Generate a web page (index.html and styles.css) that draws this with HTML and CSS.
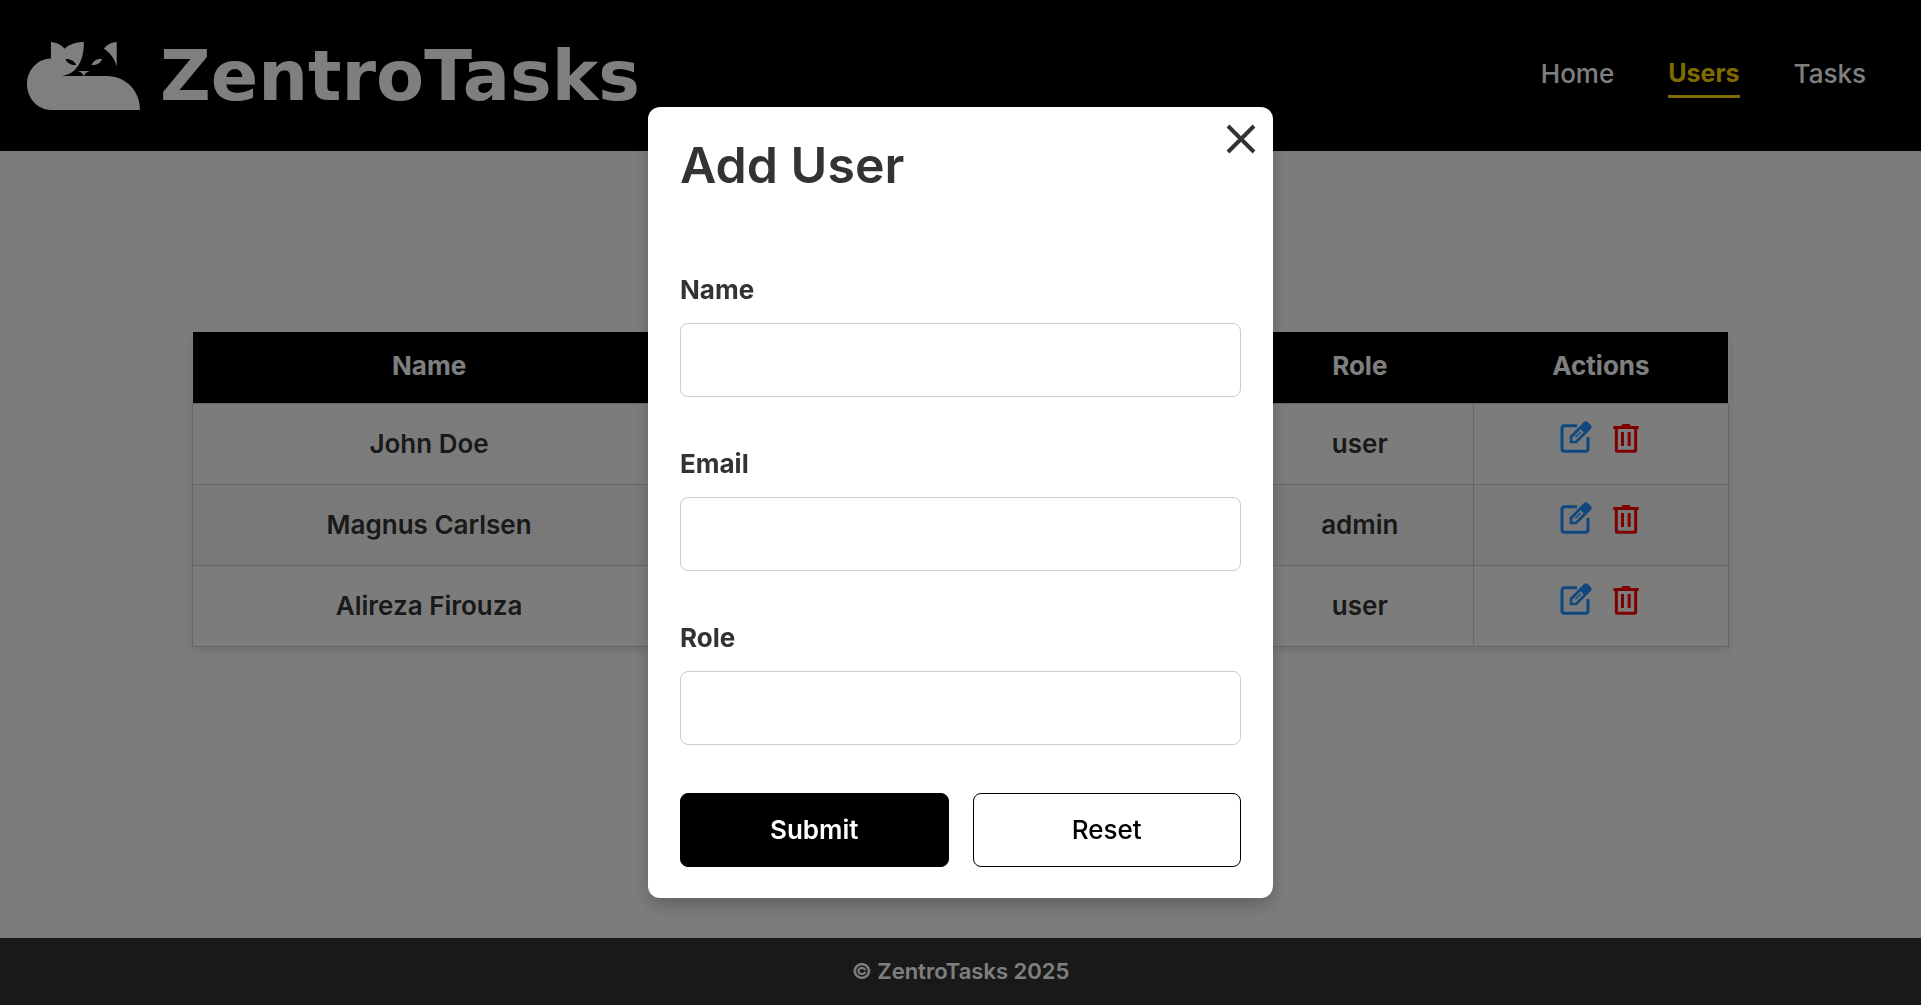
FILE: index.html
```html
<!DOCTYPE html>
<html lang="en">
<head>
  <meta charset="utf-8">
  <meta name="viewport" content="width=device-width, initial-scale=1">
  <title>ZentroTasks - Users</title>
  <link rel="stylesheet" href="styles.css">
</head>
<body>
  <svg class="sprite" aria-hidden="true">
    <symbol id="icon-edit" viewBox="0 0 96 96">
      <path d="M51 14H13Q6 14 6 21V84Q6 91 13 91H77Q84 91 84 84V48" fill="none" stroke="currentColor" stroke-width="9"/>
      <path fill="currentColor" fill-rule="evenodd" d="M29 67V46L71 4Q77-2 84 4L92 12Q98 18 92 25L50 67ZM37 59H46L71 34L62 25L37 50Z"/>
      <path d="M46 49L62 33" stroke="currentColor" stroke-width="4"/>
    </symbol>
    <symbol id="icon-trash" viewBox="0 0 96 96">
      <path fill="currentColor" d="M10 15H34Q34 9 40 9H56Q62 9 62 15H86V24H10ZM33 33H42V75H33ZM53 33H62V75H53Z"/>
      <path d="M19 22V86Q19 91 24 91H72Q77 91 77 86V22" fill="none" stroke="currentColor" stroke-width="9"/>
    </symbol>
  </svg>

  <header class="header">
    <a class="brand" href="#">
      <svg class="brand-mark" viewBox="80 66 340 204" aria-hidden="true">
        <path fill="#fff" d="M152 66C169 67 183 75 193 86C208 73 226 66 251 66C252 122 229 163 184 168H320C377 168 420 212 420 270H152C112 270 80 235 80 192C80 150 112 115 152 115Z"/>
        <path fill="#000" d="M196 117C207 115 223 122 228 135C213 136 201 130 196 117Z"/>
        <path fill="#fff" d="M274 135C279 121 292 115 306 117C301 130 289 136 274 135Z"/>
        <path fill="#fff" d="M234 153H268C259 156 254 161 251 169C248 161 243 156 234 153Z"/>
        <path fill="#fff" d="M311 85C322 73 335 67 350 66V139C344 116 331 99 311 85Z"/>
      </svg>
      <span class="brand-name">ZentroTasks</span>
    </a>
    <nav class="nav">
      <a class="nav-link" href="#">Home</a>
      <a class="nav-link nav-link-active" href="#" aria-current="page">Users</a>
      <a class="nav-link" href="#">Tasks</a>
    </nav>
  </header>

  <main class="main">
    <table class="users">
      <colgroup>
        <col class="col-name"><col class="col-email"><col class="col-role"><col class="col-actions">
      </colgroup>
      <thead>
        <tr><th>Name</th><th>Email</th><th>Role</th><th>Actions</th></tr>
      </thead>
      <tbody>
        <tr>
          <td>John Doe</td><td>john@example.com</td><td>user</td>
          <td class="actions-cell"><div class="actions">
            <button class="icon-button edit" type="button" aria-label="Edit John Doe"><svg class="icon"><use href="#icon-edit"/></svg></button>
            <button class="icon-button delete" type="button" aria-label="Delete John Doe"><svg class="icon"><use href="#icon-trash"/></svg></button>
          </div></td>
        </tr>
        <tr>
          <td>Magnus Carlsen</td><td>magnus@example.com</td><td>admin</td>
          <td class="actions-cell"><div class="actions">
            <button class="icon-button edit" type="button" aria-label="Edit Magnus Carlsen"><svg class="icon"><use href="#icon-edit"/></svg></button>
            <button class="icon-button delete" type="button" aria-label="Delete Magnus Carlsen"><svg class="icon"><use href="#icon-trash"/></svg></button>
          </div></td>
        </tr>
        <tr>
          <td>Alireza Firouza</td><td>alireza@example.com</td><td>user</td>
          <td class="actions-cell"><div class="actions">
            <button class="icon-button edit" type="button" aria-label="Edit Alireza Firouza"><svg class="icon"><use href="#icon-edit"/></svg></button>
            <button class="icon-button delete" type="button" aria-label="Delete Alireza Firouza"><svg class="icon"><use href="#icon-trash"/></svg></button>
          </div></td>
        </tr>
      </tbody>
    </table>
    <button class="button button-primary add-user" type="button">Add User</button>
  </main>

  <footer class="footer">© ZentroTasks 2025</footer>

  <div class="overlay">
    <section class="modal" role="dialog" aria-modal="true" aria-labelledby="modal-title">
      <button class="close" type="button" aria-label="Close">
        <svg class="close-icon" viewBox="0 0 30 30"><path d="M2 2L28 28M28 2L2 28" stroke="currentColor" stroke-width="4"/></svg>
      </button>
      <h2 class="modal-title" id="modal-title">Add User</h2>
      <form class="form">
        <div class="field">
          <label class="label" for="name">Name</label>
          <input class="input" id="name" type="text">
        </div>
        <div class="field">
          <label class="label" for="email">Email</label>
          <input class="input" id="email" type="email">
        </div>
        <div class="field">
          <label class="label" for="role">Role</label>
          <input class="input" id="role" type="text">
        </div>
        <div class="form-buttons">
          <button class="button button-primary" type="submit">Submit</button>
          <button class="button button-outline" type="reset">Reset</button>
        </div>
      </form>
    </section>
  </div>
</body>
</html>
```
FILE: styles.css
```css
*,
*::before,
*::after {
  box-sizing: border-box;
}

body {
  margin: 0;
  min-height: 100vh;
  display: flex;
  flex-direction: column;
  background: #f9f9f9;
  color: #333;
  font-family: Inter, "Open Sans", sans-serif;
  font-size: 26px;
  font-weight: 500;
  line-height: 38px;
}

button {
  font: inherit;
  cursor: pointer;
}

.sprite {
  position: absolute;
  width: 0;
  height: 0;
}

/* Header */

.header {
  display: flex;
  align-items: center;
  justify-content: space-between;
  min-height: 151px;
  padding: 0 55px 0 27px;
  background: #000;
}

.brand {
  display: flex;
  align-items: center;
  gap: 20px;
  color: #fff;
  text-decoration: none;
}

.brand-mark {
  width: 113px;
  height: 68px;
}

.brand-name {
  font-family: "DejaVu Sans", sans-serif;
  font-size: 70px;
  font-weight: 700;
  line-height: 72px;
}

.nav {
  display: flex;
  align-items: center;
  gap: 54px;
}

.nav-link {
  padding-bottom: 3px;
  color: #fff;
  text-decoration: none;
}

.nav-link-active {
  border-bottom: 3px solid #ffd700;
  color: #ffd700;
  font-size: 25px;
  font-weight: 700;
}

/* Users table */

.main {
  flex: 1;
  display: flex;
  flex-direction: column;
  align-items: center;
  justify-content: center;
  gap: 40px;
}

.users {
  width: 80%;
  table-layout: fixed;
  border-collapse: collapse;
  box-shadow: 0 4px 8px rgba(0, 0, 0, 0.1);
  text-align: center;
}

.col-name { width: 30.8%; }
.col-email { width: 37.8%; }
.col-role { width: 14.8%; }
.col-actions { width: 16.6%; }

.users th {
  height: 71px;
  padding: 0 16px 3px;
  background: #000;
  color: #fff;
  font-weight: 700;
}

.users td {
  height: 81px;
  padding: 0 16px;
  border: 1px solid #ccc;
  font-weight: 600;
}

.users tbody tr:nth-child(even) {
  background: #f2f2f2;
}

.users .actions-cell {
  padding-top: 17px;
  vertical-align: top;
}

.actions {
  display: flex;
  justify-content: center;
  gap: 18px;
}

.icon-button {
  display: flex;
  padding: 0;
  border: 0;
  background: none;
}

.icon {
  width: 32px;
  height: 32px;
}

.edit { color: #1e90ff; }
.delete { color: #f00; }

/* Footer */

.footer {
  padding: 14px 0 15px;
  background: #333;
  color: #fff;
  font-size: 22px;
  font-weight: 600;
  text-align: center;
}

/* Buttons */

.button {
  min-height: 74px;
  border: 1px solid #000;
  border-radius: 8px;
}

.button-primary {
  background: #000;
  color: #fff;
  font-weight: 600;
}

.button-outline {
  background: #fff;
  color: #000;
}

.add-user {
  min-height: 70px;
  padding: 0 32px;
}

/* Modal */

.overlay {
  position: fixed;
  inset: 0;
  display: flex;
  align-items: center;
  justify-content: center;
  background: rgba(0, 0, 0, 0.5);
}

.modal {
  position: relative;
  width: 625px;
  max-width: 100%;
  padding: 32px 32px 31px;
  border-radius: 12px;
  background: #fff;
  box-shadow: 0 8px 16px rgba(0, 0, 0, 0.2);
}

.modal-title {
  margin: 0 0 80px;
  font-size: 50px;
  font-weight: 600;
  line-height: 52px;
}

.close {
  position: absolute;
  top: 17px;
  right: 17px;
  display: flex;
  padding: 0;
  border: 0;
  background: none;
  color: #333;
}

.close-icon {
  width: 30px;
  height: 30px;
}

.form {
  display: flex;
  flex-direction: column;
  gap: 48px;
}

.field {
  display: flex;
  flex-direction: column;
  gap: 14px;
}

.label {
  font-weight: 700;
}

.input {
  width: 100%;
  height: 74px;
  padding: 0 16px;
  border: 1px solid #ccc;
  border-radius: 8px;
  background: #fff;
  color: inherit;
  font: inherit;
}

.form-buttons {
  display: grid;
  grid-template-columns: 1fr 1fr;
  gap: 24px;
}
```
